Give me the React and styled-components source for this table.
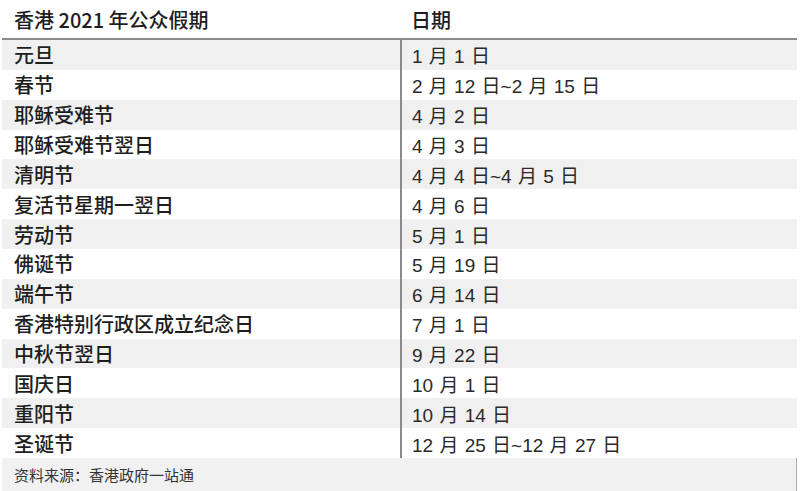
import React from "react";
import styled, { createGlobalStyle } from "styled-components";

const GlobalStyle = createGlobalStyle`
  html, body {
    margin: 0;
    padding: 0;
    background: #fff;
  }
`;

const holidays = [
  ["元旦", "1 月 1 日"],
  ["春节", "2 月 12 日~2 月 15 日"],
  ["耶稣受难节", "4 月 2 日"],
  ["耶稣受难节翌日", "4 月 3 日"],
  ["清明节", "4 月 4 日~4 月 5 日"],
  ["复活节星期一翌日", "4 月 6 日"],
  ["劳动节", "5 月 1 日"],
  ["佛诞节", "5 月 19 日"],
  ["端午节", "6 月 14 日"],
  ["香港特别行政区成立纪念日", "7 月 1 日"],
  ["中秋节翌日", "9 月 22 日"],
  ["国庆日", "10 月 1 日"],
  ["重阳节", "10 月 14 日"],
  ["圣诞节", "12 月 25 日~12 月 27 日"],
];

const Page = styled.div`
  width: 800px;
  height: 491px;
  padding: 0 3px 0 2px;
  box-sizing: border-box;
  display: flex;
  flex-direction: column;
  overflow: hidden;
`;

const HeadRow = styled.div`
  display: grid;
  grid-template-columns: 398px 1fr;
  height: 38px;
  align-items: center;
  border-bottom: 2px solid #8a8a8a;
`;

const HeadCell = styled.div`
  padding-left: ${(p) => (p.$right ? "11px" : "12px")};
  font-family: "Noto Sans CJK SC", "Noto Sans", sans-serif;
  font-weight: 500;
  font-size: 20px;
  color: #1e1e1e;
  padding-top: 1px;
`;

const Row = styled.div`
  display: grid;
  grid-template-columns: 398px 1fr;
  height: 29.86px;
  background: ${(p) => (p.$shaded ? "#f0f0f0" : "#fff")};
`;

const NameCell = styled.div`
  display: flex;
  align-items: center;
  padding-left: 12px;
  font-family: "Noto Sans CJK SC", sans-serif;
  font-weight: 500;
  font-size: 20px;
  color: #1e1e1e;
`;

const DateCell = styled.div`
  display: flex;
  align-items: center;
  padding-left: 10px;
  border-left: 2px solid #8a8a8a;
  font-family: "Liberation Sans", "Noto Sans CJK SC", sans-serif;
  font-size: 19px;
  word-spacing: 1px;
  color: #2a2a2a;
`;

const Footer = styled.div`
  flex: 1;
  display: flex;
  align-items: center;
  padding-left: 12px;
  background: #f1f1f1;
  border-right: 1px solid #b0b0b0;
  font-family: "Noto Sans CJK SC", sans-serif;
  font-size: 15px;
  color: #333;
`;

export default function App() {
  return (
    <>
      <GlobalStyle />
      <Page>
        <HeadRow>
          <HeadCell>香港 2021 年公众假期</HeadCell>
          <HeadCell $right>日期</HeadCell>
        </HeadRow>
        {holidays.map(([name, date], i) => (
          <Row key={name} $shaded={i % 2 === 0}>
            <NameCell>{name}</NameCell>
            <DateCell>{date}</DateCell>
          </Row>
        ))}
        <Footer>资料来源：香港政府一站通</Footer>
      </Page>
    </>
  );
}
